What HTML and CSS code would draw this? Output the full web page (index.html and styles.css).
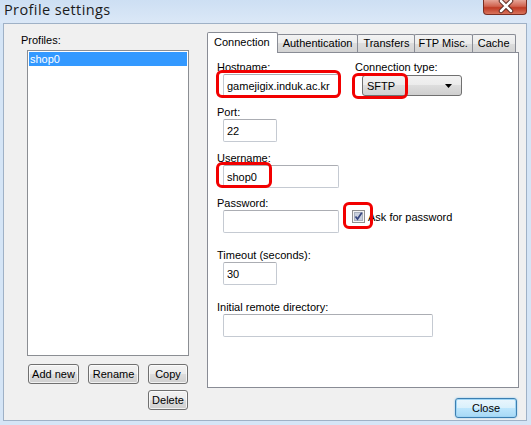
FILE: index.html
```html
<!DOCTYPE html>
<html lang="en">
<head>
    <meta charset="UTF-8">
    <title>Profile settings</title>
    <link rel="stylesheet" href="styles.css">
</head>
<body>
    <div class="window">
        <!-- Title bar -->
        <div class="titlebar">
            <span class="title">Profile settings</span>
            <span class="close-x">
                <svg width="44" height="15" viewBox="0 0 44 15">
                    <path d="M17 2 L27 12 M27 2 L17 12" stroke="#5a2a22" stroke-width="4.5" stroke-linecap="round"/>
                    <path d="M17 2 L27 12 M27 2 L17 12" stroke="#fff" stroke-width="2.5" stroke-linecap="round"/>
                </svg>
            </span>
        </div>

        <div class="content">
            <!-- Profiles list -->
            <div class="profiles">
                <div class="label">Profiles:</div>
                <ul class="listbox">
                    <li class="selected">shop0</li>
                </ul>
                <div class="profile-buttons">
                    <button class="btn">Add new</button>
                    <button class="btn">Rename</button>
                    <button class="btn">Copy</button>
                    <button class="btn delete">Delete</button>
                </div>
            </div>

            <!-- Settings tabs -->
            <div class="settings">
                <ul class="tabs">
                    <li class="tab active">Connection</li>
                    <li class="tab">Authentication</li>
                    <li class="tab">Transfers</li>
                    <li class="tab narrow">FTP Misc.</li>
                    <li class="tab">Cache</li>
                </ul>
                <div class="pane">
                    <div class="row">
                        <div class="col-host">
                            <div class="label">Hostname:</div>
                            <input class="field wide" type="text" value="gamejigix.induk.ac.kr">
                        </div>
                        <div>
                            <div class="label">Connection type:</div>
                            <div class="select">
                                <span>SFTP</span>
                                <svg width="7" height="4" viewBox="0 0 7 4"><path d="M0 0 H7 L3.5 4 Z" fill="#000"/></svg>
                            </div>
                        </div>
                    </div>

                    <div class="group g-port">
                        <div class="label">Port:</div>
                        <input class="field short" type="text" value="22">
                    </div>

                    <div class="group g-user">
                        <div class="label">Username:</div>
                        <input class="field wide" type="text" value="shop0">
                    </div>

                    <div class="group g-pass">
                        <div class="label">Password:</div>
                        <div class="row">
                            <input class="field wide" type="password">
                            <label class="check">
                                <svg width="13" height="13" viewBox="0 0 13 13">
                                    <rect x="0.5" y="0.5" width="12" height="12" fill="#f4f4f4" stroke="#8f8f8f"/>
                                    <rect x="2.5" y="2.5" width="8" height="8" fill="#c9d0dd" stroke="#a9b0bd"/>
                                    <path d="M3.5 6.5 L5.5 9 L9.8 2.8" fill="none" stroke="#37467f" stroke-width="1.7"/>
                                </svg>
                                <span>Ask for password</span>
                            </label>
                        </div>
                    </div>

                    <div class="group g-timeout">
                        <div class="label">Timeout (seconds):</div>
                        <input class="field short" type="text" value="30">
                    </div>

                    <div class="group g-dir">
                        <div class="label">Initial remote directory:</div>
                        <input class="field dir" type="text">
                    </div>
                </div>
                <div class="footer">
                    <button class="btn btn-default">Close</button>
                </div>
            </div>
        </div>

        <!-- Red highlight marks drawn over the dialog -->
        <div class="mark m-host"></div>
        <div class="mark m-type"></div>
        <div class="mark m-user"></div>
        <div class="mark m-check"></div>
    </div>
</body>
</html>
```

FILE: styles.css
```css
/* General */
body {
    margin: 0;
    font-family: 'Liberation Sans', Arial, sans-serif;
    font-size: 11px;
    color: #000;
}

.window {
    position: relative;
    width: 531px;
    height: 425px;
    background: #d5e5f6;
    overflow: hidden;
}

/* Title bar */
.titlebar {
    height: 23px;
    display: flex;
    justify-content: space-between;
    background: linear-gradient(#cddff3, #dbe8f7);
}

.titlebar .title {
    font-family: 'Open Sans', sans-serif;
    font-size: 14.5px;
    letter-spacing: 0.4px;
    color: #1b1b1b;
    padding: 0 0 0 4px;
}

.close-x {
    width: 44px;
    height: 15px;
    margin-right: 4px;
    border: 1px solid #7a2e22;
    border-top: none;
    border-radius: 0 0 4px 4px;
    background: linear-gradient(#e6a597, #d0634f 45%, #bf3a24 55%, #d9745c);
    box-sizing: border-box;
}

.close-x svg {
    display: block;
    margin-top: -1px;
}

/* Dialog body */
.content {
    display: flex;
    margin: 0 4px 0 3px;
    height: 398px;
    padding: 9px 0 0 17px;
    box-sizing: border-box;
    background: #f0f0f0;
    border: 1px solid #9fb1c6;
}

.label {
    height: 14px;
    line-height: 14px;
    white-space: nowrap;
}

/* Profiles column */
.profiles {
    width: 186px;
    flex: none;
}

.listbox {
    list-style: none;
    margin: 3px 0 0 6px;
    padding: 1px;
    width: 162px;
    height: 306px;
    box-sizing: border-box;
    background: #fff;
    border: 1px solid #8b8e93;
}

.listbox li {
    height: 14px;
    line-height: 14px;
    padding-left: 1px;
}

.listbox .selected {
    background: #3399ff;
    color: #fff;
}

.profile-buttons {
    display: grid;
    grid-template-columns: 51px 51px 40px;
    column-gap: 9px;
    row-gap: 6px;
    margin: 8px 0 0 7px;
}

.profile-buttons .delete {
    grid-column: 3;
}

/* Buttons */
.btn {
    height: 20px;
    padding: 0;
    font-family: inherit;
    font-size: 11px;
    color: #000;
    border: 1px solid #707070;
    border-radius: 3px;
    background: linear-gradient(#f2f2f2, #ebebeb 50%, #dddddd 50%, #cfcfcf);
    box-shadow: inset 0 0 0 1px rgba(255, 255, 255, 0.7);
}

.btn-default {
    width: 62px;
    border-color: #3c7fb1;
    background: linear-gradient(#eaf6fd, #d9f0fc 50%, #bee6fd 50%, #a7d9f5);
    box-shadow: inset 0 0 0 1px #9fd5f5, 0 0 2px #7fc3ee;
}

/* Settings column */
.settings {
    width: 312px;
    flex: none;
    margin-top: -1px;
}

.tabs {
    list-style: none;
    margin: 0;
    padding: 0;
    display: flex;
    align-items: flex-end;
    height: 20px;
}

.tab {
    height: 18px;
    line-height: 17px;
    padding: 0 5px;
    margin-right: -1px;
    box-sizing: border-box;
    border: 1px solid #898c95;
    border-bottom: none;
    border-radius: 2px 2px 0 0;
    background: linear-gradient(#f3f3f3, #ebebeb 50%, #dddddd 50%, #d3d3d3);
}

.tab.narrow {
    padding: 0 4px 0 3px;
}

.tab.active {
    position: relative;
    z-index: 1;
    height: 21px;
    line-height: 19px;
    padding: 0 7px 0 6px;
    margin-bottom: -1px;
    background: #fff;
}

.pane {
    height: 336px;
    box-sizing: border-box;
    padding: 7px 0 0 9px;
    background: #fff;
    border: 1px solid #898c95;
}

.row {
    display: flex;
}

.col-host {
    width: 138px;
}

.field {
    display: block;
    height: 23px;
    margin-left: 6px;
    padding: 0 0 0 3px;
    box-sizing: border-box;
    font-family: inherit;
    font-size: 11px;
    color: #000;
    border: 1px solid #c5cad2;
    border-top-color: #abadb3;
    border-radius: 2px;
    background: #fff;
}

.field.wide {
    width: 116px;
}

.field.short {
    width: 54px;
}

.field.dir {
    width: 210px;
}

.select {
    display: flex;
    align-items: center;
    justify-content: space-between;
    width: 100px;
    height: 21px;
    margin: 1px 0 0 7px;
    padding: 0 9px 0 4px;
    box-sizing: border-box;
    border: 1px solid #707070;
    border-radius: 3px;
    background: linear-gradient(#f2f2f2, #ebebeb 50%, #dddddd 50%, #cfcfcf);
}

.g-port { margin-top: 8px; }
.g-user { margin-top: 9px; }
.g-pass { margin-top: 8px; }
.g-timeout { margin-top: 15px; }
.g-dir { margin-top: 15px; }

.check {
    display: flex;
    align-items: flex-start;
    margin-left: 13px;
    gap: 3px;
}

.check svg {
    display: block;
}

.check span {
    line-height: 14px;
}

.footer {
    display: flex;
    justify-content: flex-end;
    margin: 10px 2px 0 0;
}

/* Red highlight marks */
.mark {
    position: absolute;
    border: 3px solid #f20000;
    border-radius: 6px;
    box-sizing: border-box;
}

.m-host { left: 216px; top: 70px; width: 125px; height: 28px; }
.m-type { left: 352px; top: 73px; width: 56px; height: 26px; }
.m-user { left: 216px; top: 162px; width: 56px; height: 26px; }
.m-check { left: 343px; top: 202px; width: 30px; height: 27px; }
```
